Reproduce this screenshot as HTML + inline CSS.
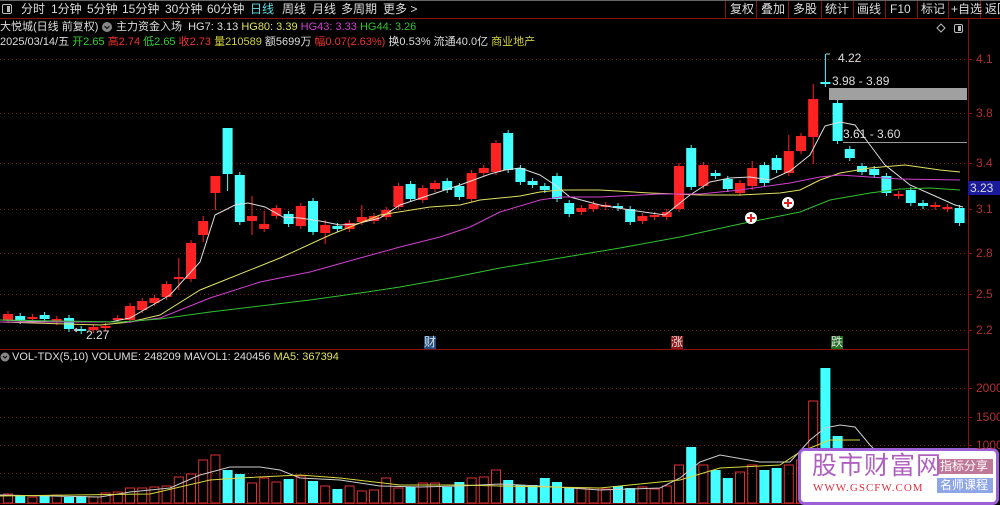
<!DOCTYPE html>
<html><head><meta charset="utf-8"><style>
*{margin:0;padding:0;box-sizing:border-box}
body{width:1000px;height:505px;background:#000;overflow:hidden;position:relative;font-family:"Liberation Sans","Noto Sans CJK SC",sans-serif;font-size:12px;color:#ddd}
.t{position:absolute;white-space:nowrap;line-height:14px}
.s{font-size:11px}
svg{position:absolute;left:0;top:0}
</style></head><body>
<svg id="s" width="1000" height="505" viewBox="0 0 1000 505">
<rect x="0" y="0" width="1000" height="1" fill="#666"/>
<line x1="0" y1="18.5" x2="1000" y2="18.5" stroke="#8a1010"/>
<g stroke="#8a1010"><line x1="725.5" y1="1" x2="725.5" y2="18"/><line x1="756.5" y1="1" x2="756.5" y2="18"/><line x1="788.5" y1="1" x2="788.5" y2="18"/><line x1="821.5" y1="1" x2="821.5" y2="18"/><line x1="853.5" y1="1" x2="853.5" y2="18"/><line x1="885.5" y1="1" x2="885.5" y2="18"/><line x1="917.5" y1="1" x2="917.5" y2="18"/><line x1="948.5" y1="1" x2="948.5" y2="18"/><line x1="980.5" y1="1" x2="980.5" y2="18"/></g>
<rect x="2.5" y="4.5" width="9" height="9" rx="1.5" fill="none" stroke="#bbb"/><rect x="7" y="6" width="3" height="6" fill="#bbb"/>
<line x1="968.5" y1="19" x2="968.5" y2="505" stroke="#8a1010"/>
<line x1="0" y1="349.5" x2="968" y2="349.5" stroke="#8a1010"/>
<line x1="0" y1="503.5" x2="968" y2="503.5" stroke="#8a1010"/>
<g stroke="#7a2020" stroke-dasharray="1,3">
<line x1="0" y1="59.5" x2="968" y2="59.5"/><line x1="0" y1="113.5" x2="968" y2="113.5"/><line x1="0" y1="163.5" x2="968" y2="163.5"/><line x1="0" y1="209.5" x2="968" y2="209.5"/><line x1="0" y1="253.5" x2="968" y2="253.5"/><line x1="0" y1="294.5" x2="968" y2="294.5"/><line x1="0" y1="330.5" x2="968" y2="330.5"/>
<line x1="0" y1="388.5" x2="968" y2="388.5"/><line x1="0" y1="417.5" x2="968" y2="417.5"/><line x1="0" y1="445.5" x2="968" y2="445.5"/><line x1="0" y1="473.5" x2="968" y2="473.5"/>
</g>
<g stroke="#8a1010"><line x1="968" y1="59.5" x2="972" y2="59.5"/><line x1="968" y1="113.5" x2="972" y2="113.5"/><line x1="968" y1="163.5" x2="972" y2="163.5"/><line x1="968" y1="209.5" x2="972" y2="209.5"/><line x1="968" y1="253.5" x2="972" y2="253.5"/><line x1="968" y1="294.5" x2="972" y2="294.5"/><line x1="968" y1="330.5" x2="972" y2="330.5"/><line x1="968" y1="388.5" x2="972" y2="388.5"/><line x1="968" y1="417.5" x2="972" y2="417.5"/><line x1="968" y1="445.5" x2="972" y2="445.5"/></g>
<rect x="829" y="88" width="138" height="12" fill="#a0a0a0"/>
<line x1="843" y1="142.5" x2="967" y2="142.5" stroke="#999"/>
<rect x="968" y="181" width="32" height="14" fill="#1a1a9a"/>
<g id="c"></g>
<g fill="none" stroke-width="1">
<polyline stroke="#ddd" points="0,320 60,322 110,322 130,318 170,295 200,262 215,215 235,205 248,203 265,207 283,217 300,218 320,221 340,225 356,224 380,218 400,205 430,195 460,185 490,174 505,170 520,168 540,175 555,185 570,197 600,205 630,210 665,215 690,195 710,182 730,178 750,177 770,180 790,171 810,155 825,126 840,122 855,125 870,145 885,165 910,185 935,196 955,205 963,207"/>
<polyline stroke="#e0e060" points="0,322 100,325 130,322 160,315 200,290 230,278 280,258 330,235 380,215 430,207 460,205 480,200 500,198 520,196 540,192 560,190 600,190 650,193 700,195 740,195 780,193 800,190 820,180 840,173 870,168 905,165 940,170 960,172"/>
<polyline stroke="#d040d0" points="0,322 130,322 160,318 210,298 260,282 310,272 360,258 400,247 440,237 470,227 500,212 540,200 560,197 600,197 660,194 700,194 740,190 790,183 820,177 840,175 900,179 960,180"/>
<polyline stroke="#30c030" points="0,320 120,322 160,319 210,312 260,306 310,300 360,293 400,287 450,278 500,268 560,258 620,248 680,237 740,224 800,212 830,200 870,193 900,189 930,188 960,190"/>
<polyline stroke="#ccc" points="0,495 100,497 130,492 170,488 200,475 230,467 260,467 280,470 300,478 340,480 380,486 420,487 460,486 500,484 540,486 600,490 660,488 680,478 700,462 720,455 760,462 790,462 810,440 825,428 840,425 855,427 870,445 880,455 900,470"/>
<polyline stroke="#d8d840" points="0,496 150,494 210,480 240,478 300,475 340,478 400,485 460,485 500,486 600,488 680,480 720,468 780,465 800,452 830,440 860,440"/>
</g>
<g><circle cx="751" cy="218" r="6" fill="#fff"/><path d="M747 218h8M751 214v8" stroke="#e02020" stroke-width="2"/>
<circle cx="788" cy="203" r="6" fill="#fff"/><path d="M784 203h8M788 199v8" stroke="#e02020" stroke-width="2"/></g>
<path d="M826 54h4M82 330h-8M74 330l3-2M74 330l3 2" stroke="#ccc" fill="none"/>
<rect x="424" y="336" width="12" height="13" fill="#205080"/>
<rect x="671" y="336" width="12" height="13" fill="#901818"/>
<rect x="831" y="336" width="12" height="13" fill="#207020"/>
<path d="M941 24l4 4-4 4-4-4z" fill="none" stroke="#bbb"/>
<rect x="954.5" y="24.5" width="8" height="8" rx="1.5" fill="none" stroke="#bbb"/><rect x="958" y="26" width="3" height="5" fill="#bbb"/>
<circle cx="5" cy="357" r="4.5" fill="#888"/><path d="M3 356l2 2 2-2" stroke="#000" fill="none"/>
<circle cx="107" cy="27" r="5" fill="#888"/><path d="M104.5 26l2.5 2.5 2.5-2.5" stroke="#000" fill="none"/>
<rect x="799.5" y="449.5" width="198" height="54" rx="5" fill="#fff" stroke="#9b5fd6" stroke-width="3"/>
<rect x="937" y="459" width="56" height="15" fill="#c07898"/>
<rect x="937" y="478" width="56" height="15" fill="#8fa6e6"/>
</svg>
<div class="t" style="left:21px;top:2px">分时</div>
<div class="t" style="left:51px;top:2px">1分钟</div>
<div class="t" style="left:87px;top:2px">5分钟</div>
<div class="t" style="left:122px;top:2px">15分钟</div>
<div class="t" style="left:165px;top:2px">30分钟</div>
<div class="t" style="left:207px;top:2px">60分钟</div>
<div class="t" style="left:250px;top:2px;color:#5ee0e8">日线</div>
<div class="t" style="left:282px;top:2px">周线</div>
<div class="t" style="left:312px;top:2px">月线</div>
<div class="t" style="left:341px;top:2px">多周期</div>
<div class="t" style="left:383px;top:2px">更多 &gt;</div>
<div class="t" style="left:730px;top:2px">复权</div>
<div class="t" style="left:761px;top:2px">叠加</div>
<div class="t" style="left:793px;top:2px">多股</div>
<div class="t" style="left:825px;top:2px">统计</div>
<div class="t" style="left:857px;top:2px">画线</div>
<div class="t" style="left:890px;top:2px">F10</div>
<div class="t" style="left:921px;top:2px">标记</div>
<div class="t" style="left:951px;top:2px">+自选</div>
<div class="t" style="left:985px;top:2px">返回</div>
<div class="t s" style="left:0;top:20px">大悦城(日线 前复权)</div>
<div class="t s" style="left:116px;top:20px">主力资金入场 &nbsp;HG7: 3.13 <span style="color:#e0e060">HG80: 3.39</span> <span style="color:#d040d0">HG43: 3.33</span> <span style="color:#30c030">HG44: 3.26</span></div>
<div class="t s" style="left:0;top:35px">2025/03/14/五 <span style="color:#30d030">开2.65</span> <span style="color:#f03030">高2.74</span> <span style="color:#30d030">低2.65</span> <span style="color:#f03030">收2.73</span> <span style="color:#d0d040">量210589</span> 额5699万 <span style="color:#f03030">幅0.07(2.63%)</span> 换0.53% 流通40.0亿 <span style="color:#d0d040">商业地产</span></div>
<div class="t" style="left:838px;top:51px">4.22</div>
<div class="t" style="left:832px;top:74px">3.98 - 3.89</div>
<div class="t" style="left:843px;top:127px">3.61 - 3.60</div>
<div class="t" style="left:86px;top:328px">2.27</div>
<div class="t" style="left:424px;top:335px">财</div>
<div class="t" style="left:671px;top:335px">涨</div>
<div class="t" style="left:831px;top:335px">跌</div>
<div class="t" style="left:970px;top:181px;color:#ddd">3.23</div>
<div class="t s" style="left:12px;top:350px">VOL-TDX(5,10) VOLUME: 248209 MAVOL1: 240456 <span style="color:#e0e060">MA5: 367394</span></div>
<div style="color:#b03030">
<div class="t" style="left:976px;top:52px">4.1</div>
<div class="t" style="left:976px;top:106px">3.8</div>
<div class="t" style="left:976px;top:156px">3.4</div>
<div class="t" style="left:976px;top:202px">3.1</div>
<div class="t" style="left:976px;top:246px">2.8</div>
<div class="t" style="left:976px;top:287px">2.5</div>
<div class="t" style="left:976px;top:323px">2.2</div>
<div class="t" style="left:976px;top:381px">2000</div>
<div class="t" style="left:976px;top:410px">1500</div>
<div class="t" style="left:976px;top:438px">1000</div>
</div>
<div class="t" style="left:812px;top:452px;font-size:25px;line-height:28px;color:#b060c0;letter-spacing:1px">股市财富网</div>
<div class="t" style="left:813px;top:481px;font-family:'Liberation Serif',serif;font-size:11px;color:#e03040;letter-spacing:1px">WWW.GSCFW.COM</div>
<div class="t" style="left:940px;top:459px;color:#fff">指标分享</div>
<div class="t" style="left:940px;top:478px;color:#fff">名师课程</div>
<script>
var C=[[320,314,'r'],[321,316,'c'],[319,317,'r'],[319,315,'c'],[322,319,'r'],[329,318,'c'],[331,329,'c'],[330,327,'r'],[328,326,'r'],[320,318,'r'],[320,306,'r'],[310,301,'r'],[303,298,'r'],[297,284,'r'],[279,277,'r',258,290],[279,243,'r'],[235,221,'r',216,242],[193,176,'r',176,210],[174,128,'c',128,191],[222,175,'c'],[221,216,'r',196,235],[229,224,'r',211,232],[216,208,'r'],[224,214,'c'],[226,206,'r'],[232,201,'c'],[233,225,'r',220,244],[229,226,'c'],[229,223,'r'],[222,217,'r',205,225],[221,216,'r'],[217,210,'r'],[207,186,'r'],[199,184,'c'],[200,188,'r'],[189,183,'r'],[190,181,'c'],[197,186,'c'],[199,173,'r'],[173,168,'r'],[172,143,'r'],[170,133,'c'],[182,168,'c'],[185,181,'c'],[190,186,'c'],[199,176,'c'],[214,203,'c'],[212,208,'r'],[209,204,'r'],[207,205,'r'],[208,206,'c'],[222,209,'c'],[221,216,'r'],[217,215,'r'],[217,212,'r'],[209,166,'r'],[187,148,'c'],[186,165,'r'],[176,173,'c'],[189,179,'c'],[193,183,'r'],[186,168,'r',161,190],[183,165,'c'],[170,158,'c'],[173,151,'r',135,176],[151,136,'r'],[137,99,'r',84,164],[84,82,'c',54,87],[141,103,'c'],[158,149,'c'],[172,166,'c'],[175,169,'c'],[193,176,'c'],[196,194,'r'],[203,190,'c'],[206,203,'c'],[207,205,'r'],[209,207,'r'],[223,208,'c']];
var V=[494,496,497,496,495,497,496,497,493,492,488,488,487,486,477,474,460,455,470,474,483,478,482,479,476,481,486,489,486,491,490,478,488,487,483,483,487,482,478,477,470,480,485,485,478,482,487,488,488,489,486,488,487,489,486,465,447,465,470,478,472,465,470,468,465,460,401,368,436,455,470,478,480,483,482,485,486,485,480];
var h='';
for(var i=0;i<C.length;i++){var d=C[i],x=3+i*12.2,cx=x+5,col=d[2]=='r'?'#f22':'#4ff';
var b=d[0],t=d[1];if(b-t<2){t=b-1.5;}
var wt=d[3]!==undefined?d[3]:t-3,wb=d[4]!==undefined?d[4]:b+3;
h+='<line x1="'+cx+'" y1="'+wt+'" x2="'+cx+'" y2="'+wb+'" stroke="'+col+'"/>';
h+='<rect x="'+x+'" y="'+t+'" width="10" height="'+(b-t)+'" fill="'+col+'"/>';
var vt=V[i];
if(d[2]=='r')h+='<rect x="'+(x+0.5)+'" y="'+vt+'" width="9" height="'+(503-vt)+'" fill="none" stroke="#e03030"/>';
else h+='<rect x="'+x+'" y="'+vt+'" width="10" height="'+(503-vt)+'" fill="#4ff"/>';}
document.getElementById('c').innerHTML=h;
</script>
</body></html>
